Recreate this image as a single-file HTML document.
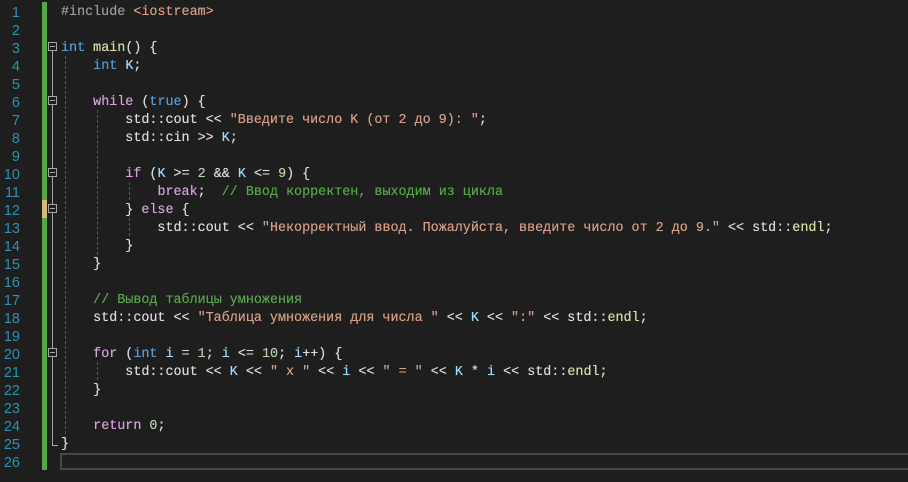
<!DOCTYPE html>
<html><head><meta charset="utf-8"><style>
body{margin:0;background:#1e1e1e;width:908px;height:482px;overflow:hidden;position:relative;font-family:"Liberation Mono","DejaVu Sans Mono",monospace;font-size:13.4px;}
.ln{position:absolute;left:0;width:20px;text-align:right;color:#2b91af;height:18px;line-height:18px;font-family:"Liberation Sans",sans-serif;font-size:14.5px;margin-top:2px}
.c{position:absolute;left:61px;white-space:pre;color:#dadada;height:18px;line-height:18px;margin-top:2px;text-shadow:0 0 0.4px currentColor}
.k{color:#569cd6}.p{color:#d8a0df}.s{color:#d69d85}.m{color:#57a64a}.n{color:#b5cea8}.v{color:#9cdcfe}.f{color:#dcdcaa}.g{color:#9b9b9b}
.fold{position:absolute;left:48px;width:9px;height:9px;border:1px solid #a5a5a5;box-sizing:border-box;background:#1e1e1e;z-index:2}
.fold:after{content:"";position:absolute;left:1px;top:3px;width:5px;height:1px;background:#a5a5a5}
.vl{position:absolute;width:1px;background:#a5a5a5}
.dl{position:absolute;width:0;border-left:1px dashed #5a5a5a}
</style></head><body>
<div style="position:absolute;left:42px;top:2px;width:5px;height:468px;background:#57a64a"></div>
<div style="position:absolute;left:42px;top:200px;width:5px;height:18px;background:#d7ba7d"></div>
<div style="position:absolute;left:60px;top:453px;width:860px;height:17px;border:2px solid #464646;box-sizing:border-box"></div>
<div class="fold" style="top:42px"></div>
<div class="vl" style="left:52px;top:51px;height:395px"></div>
<div class="vl" style="left:52px;top:445px;width:6px;height:1px"></div>
<div class="fold" style="top:96px"></div>
<div class="fold" style="top:168px"></div>
<div class="fold" style="top:204px"></div>
<div class="fold" style="top:348px"></div>
<div class="dl" style="left:65px;top:56px;height:388px"></div>
<div class="dl" style="left:97px;top:110px;height:150px"></div>
<div class="dl" style="left:129px;top:182px;height:18px"></div>
<div class="dl" style="left:129px;top:218px;height:18px"></div>
<div class="dl" style="left:97px;top:362px;height:18px"></div>
<div class="ln" style="top:2px">1</div><div class="c" style="top:2px"><span class="g">#include</span> <span class="s">&lt;iostream&gt;</span></div>
<div class="ln" style="top:20px">2</div>
<div class="ln" style="top:38px">3</div><div class="c" style="top:38px"><span class="k">int</span> <span class="f">main</span>() {</div>
<div class="ln" style="top:56px">4</div><div class="c" style="top:56px">    <span class="k">int</span> <span class="v">K</span>;</div>
<div class="ln" style="top:74px">5</div>
<div class="ln" style="top:92px">6</div><div class="c" style="top:92px">    <span class="p">while</span> (<span class="k">true</span>) {</div>
<div class="ln" style="top:110px">7</div><div class="c" style="top:110px">        std::cout &lt;&lt; <span class="s">"Введите число K (от 2 до 9): "</span>;</div>
<div class="ln" style="top:128px">8</div><div class="c" style="top:128px">        std::cin &gt;&gt; <span class="v">K</span>;</div>
<div class="ln" style="top:146px">9</div>
<div class="ln" style="top:164px">10</div><div class="c" style="top:164px">        <span class="p">if</span> (<span class="v">K</span> &gt;= <span class="n">2</span> &amp;&amp; <span class="v">K</span> &lt;= <span class="n">9</span>) {</div>
<div class="ln" style="top:182px">11</div><div class="c" style="top:182px">            <span class="p">break</span>;  <span class="m">// Ввод корректен, выходим из цикла</span></div>
<div class="ln" style="top:200px">12</div><div class="c" style="top:200px">        } <span class="p">else</span> {</div>
<div class="ln" style="top:218px">13</div><div class="c" style="top:218px">            std::cout &lt;&lt; <span class="s">"Некорректный ввод. Пожалуйста, введите число от 2 до 9."</span> &lt;&lt; std::<span class="f">endl</span>;</div>
<div class="ln" style="top:236px">14</div><div class="c" style="top:236px">        }</div>
<div class="ln" style="top:254px">15</div><div class="c" style="top:254px">    }</div>
<div class="ln" style="top:272px">16</div>
<div class="ln" style="top:290px">17</div><div class="c" style="top:290px">    <span class="m">// Вывод таблицы умножения</span></div>
<div class="ln" style="top:308px">18</div><div class="c" style="top:308px">    std::cout &lt;&lt; <span class="s">"Таблица умножения для числа "</span> &lt;&lt; <span class="v">K</span> &lt;&lt; <span class="s">":"</span> &lt;&lt; std::<span class="f">endl</span>;</div>
<div class="ln" style="top:326px">19</div>
<div class="ln" style="top:344px">20</div><div class="c" style="top:344px">    <span class="p">for</span> (<span class="k">int</span> <span class="v">i</span> = <span class="n">1</span>; <span class="v">i</span> &lt;= <span class="n">10</span>; <span class="v">i</span>++) {</div>
<div class="ln" style="top:362px">21</div><div class="c" style="top:362px">        std::cout &lt;&lt; <span class="v">K</span> &lt;&lt; <span class="s">" x "</span> &lt;&lt; <span class="v">i</span> &lt;&lt; <span class="s">" = "</span> &lt;&lt; <span class="v">K</span> * <span class="v">i</span> &lt;&lt; std::<span class="f">endl</span>;</div>
<div class="ln" style="top:380px">22</div><div class="c" style="top:380px">    }</div>
<div class="ln" style="top:398px">23</div>
<div class="ln" style="top:416px">24</div><div class="c" style="top:416px">    <span class="p">return</span> <span class="n">0</span>;</div>
<div class="ln" style="top:434px">25</div><div class="c" style="top:434px">}</div>
<div class="ln" style="top:452px">26</div>
</body></html>
